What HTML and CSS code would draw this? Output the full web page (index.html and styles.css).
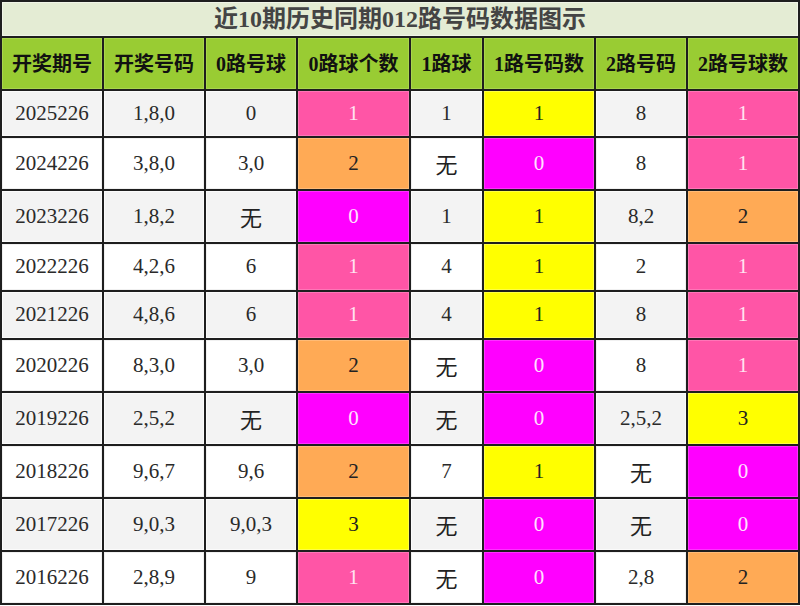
FILE: index.html
```html
<!DOCTYPE html>
<html lang="zh">
<head>
<meta charset="utf-8">
<link rel="stylesheet" href="styles.css">
</head>
<body>
<table class="chart">
  <colgroup>
    <col class="c100"><col class="c100"><col class="c90"><col class="c111">
    <col class="c71"><col class="c110"><col class="c90"><col class="c110">
  </colgroup>
  <tr class="title-row"><td colspan="8" class="title">近10期历史同期012路号码数据图示</td></tr>
  <tr class="head-row">
    <th>开奖期号</th><th>开奖号码</th><th>0路号球</th><th>0路球个数</th><th>1路球</th><th>1路号码数</th><th>2路号码</th><th>2路号球数</th>
  </tr>
  <tr class="row odd h45">
    <td>2025226</td><td>1,8,0</td><td>0</td><td class="pink">1</td><td>1</td><td class="yellow">1</td><td>8</td><td class="pink">1</td>
  </tr>
  <tr class="row even h51">
    <td>2024226</td><td>3,8,0</td><td>3,0</td><td class="orange">2</td><td class="none">无</td><td class="magenta">0</td><td>8</td><td class="pink">1</td>
  </tr>
  <tr class="row odd h51">
    <td>2023226</td><td>1,8,2</td><td class="none">无</td><td class="magenta">0</td><td>1</td><td class="yellow">1</td><td>8,2</td><td class="orange">2</td>
  </tr>
  <tr class="row even h46">
    <td>2022226</td><td>4,2,6</td><td>6</td><td class="pink">1</td><td>4</td><td class="yellow">1</td><td>2</td><td class="pink">1</td>
  </tr>
  <tr class="row odd h46">
    <td>2021226</td><td>4,8,6</td><td>6</td><td class="pink">1</td><td>4</td><td class="yellow">1</td><td>8</td><td class="pink">1</td>
  </tr>
  <tr class="row even h51">
    <td>2020226</td><td>8,3,0</td><td>3,0</td><td class="orange">2</td><td class="none">无</td><td class="magenta">0</td><td>8</td><td class="pink">1</td>
  </tr>
  <tr class="row odd h51">
    <td>2019226</td><td>2,5,2</td><td class="none">无</td><td class="magenta">0</td><td class="none">无</td><td class="magenta">0</td><td>2,5,2</td><td class="yellow">3</td>
  </tr>
  <tr class="row even h51">
    <td>2018226</td><td>9,6,7</td><td>9,6</td><td class="orange">2</td><td>7</td><td class="yellow">1</td><td class="none">无</td><td class="magenta">0</td>
  </tr>
  <tr class="row odd h51">
    <td>2017226</td><td>9,0,3</td><td>9,0,3</td><td class="yellow">3</td><td class="none">无</td><td class="magenta">0</td><td class="none">无</td><td class="magenta">0</td>
  </tr>
  <tr class="row even h51">
    <td>2016226</td><td>2,8,9</td><td>9</td><td class="pink">1</td><td class="none">无</td><td class="magenta">0</td><td>2,8</td><td class="orange">2</td>
  </tr>
</table>
</body>
</html>
```

FILE: styles.css
```css
html, body {
  margin: 0;
  padding: 0;
  background: #ffffff;
}

.chart {
  width: 800px;
  table-layout: fixed;
  border-collapse: separate;
  border-spacing: 2px;
  background: #1e1e1e;
  font-family: "Liberation Serif", "Noto Sans CJK SC", serif;
}

.c100 { width: 100px; }
.c90 { width: 90px; }
.c111 { width: 111px; }
.c71 { width: 71px; }
.c110 { width: 110px; }

.chart td,
.chart th {
  box-sizing: border-box;
  padding: 0;
  line-height: 1.2;
  text-align: center;
  vertical-align: middle;
  border: 1px solid rgba(255, 255, 255, 0.45);
}

.title {
  height: 34px;
  background: #e4ecd4;
  border-color: #f3f7ea;
  color: #444444;
  font-size: 24px;
  font-weight: bold;
}

.chart td.title {
  line-height: 1;
}

.head-row th {
  height: 51px;
  background: #99cc33;
  border-color: #a9d64c;
  color: #111111;
  font-size: 20px;
  font-weight: bold;
}

.row td {
  font-size: 21px;
  color: #2a2a2a;
}

.h45 td { height: 45px; }
.h46 td { height: 46px; }
.h51 td { height: 51px; }

.row.odd td { background: #f3f3f3; border-color: #fbfbfb; }
.row.even td { background: #ffffff; border-color: #f0f0f0; }

.row td.none {
  font-family: "Noto Sans CJK SC", sans-serif;
  font-size: 22px;
  color: #222222;
}

.row td.pink {
  background: #ff55a6;
  border-color: #ff76b8;
  color: #ffe4f1;
}

.row td.magenta {
  background: #ff00ff;
  border-color: #ff33ff;
  color: #ffe0ff;
}

.row td.yellow {
  background: #ffff00;
  border-color: #ffff44;
  color: #222222;
}

.row td.orange {
  background: #ffaa55;
  border-color: #ffbb77;
  color: #222222;
}
```
